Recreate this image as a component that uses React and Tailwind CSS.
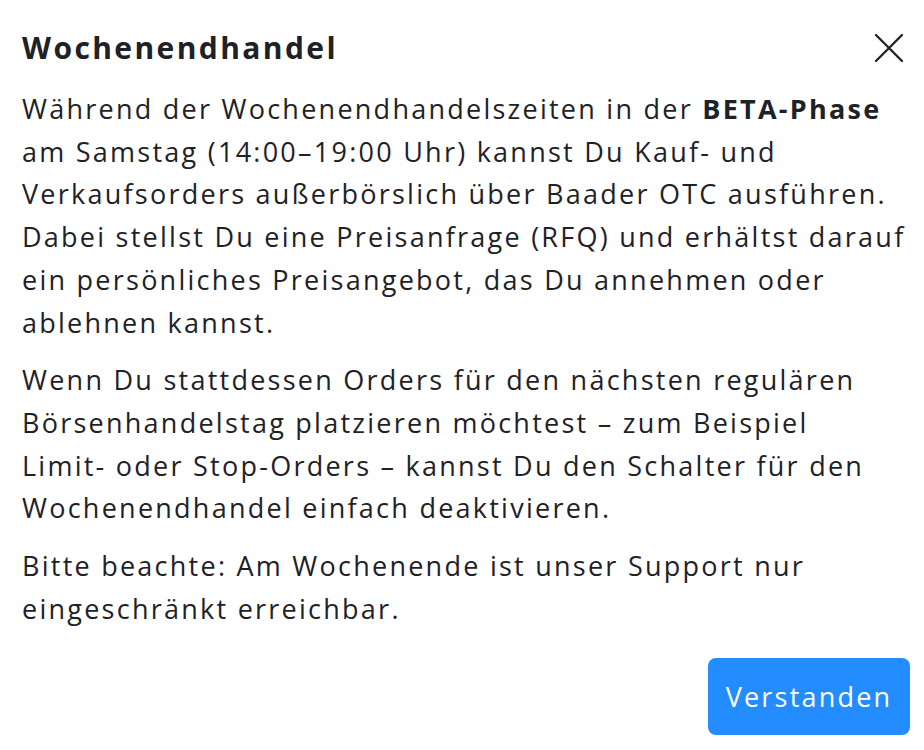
export default function App() {
  return (
    <div className="min-h-[750px] w-[924px] bg-white text-[#1e2227] font-['Open_Sans',sans-serif]">
      <div className="px-[22px] pt-[28px]">
        {/* Header */}
        <div className="flex items-center justify-between">
          <h2 className="text-[30px] font-bold leading-[40px] tracking-[2.4px]">Wochenendhandel</h2>
          <button className="mr-[-2px] text-[#1e2227]">
            <svg width="30" height="30" viewBox="0 0 30 30" fill="none" stroke="currentColor" strokeWidth="2.3" strokeLinecap="round">
              <path d="M2 2L28 28M28 2L2 28" />
            </svg>
          </button>
        </div>

        {/* Body */}
        <div className="mt-[20px] space-y-[15px] text-[27px] leading-[42.7px] tracking-[2.25px] whitespace-nowrap">
          <p>
            Während der Wochenendhandelszeiten in der <b>BETA-Phase</b>
            <br />
            am Samstag (14:00–19:00 Uhr) kannst Du Kauf- und
            <br />
            Verkaufsorders außerbörslich über Baader OTC ausführen.
            <br />
            Dabei stellst Du eine Preisanfrage (RFQ) und erhältst darauf
            <br />
            ein persönliches Preisangebot, das Du annehmen oder
            <br />
            ablehnen kannst.
          </p>
          <p>
            Wenn Du stattdessen Orders für den nächsten regulären
            <br />
            Börsenhandelstag platzieren möchtest – zum Beispiel
            <br />
            Limit- oder Stop-Orders – kannst Du den Schalter für den
            <br />
            Wochenendhandel einfach deaktivieren.
          </p>
          <p>
            Bitte beachte: Am Wochenende ist unser Support nur
            <br />
            eingeschränkt erreichbar.
          </p>
        </div>

        {/* Footer */}
        <div className="mt-[28px] flex justify-end">
          <button className="mr-[-8px] h-[77px] w-[202px] rounded-[8px] bg-[#238dff] text-[27px] tracking-[2.2px] text-white">
            Verstanden
          </button>
        </div>
      </div>
    </div>
  );
}
